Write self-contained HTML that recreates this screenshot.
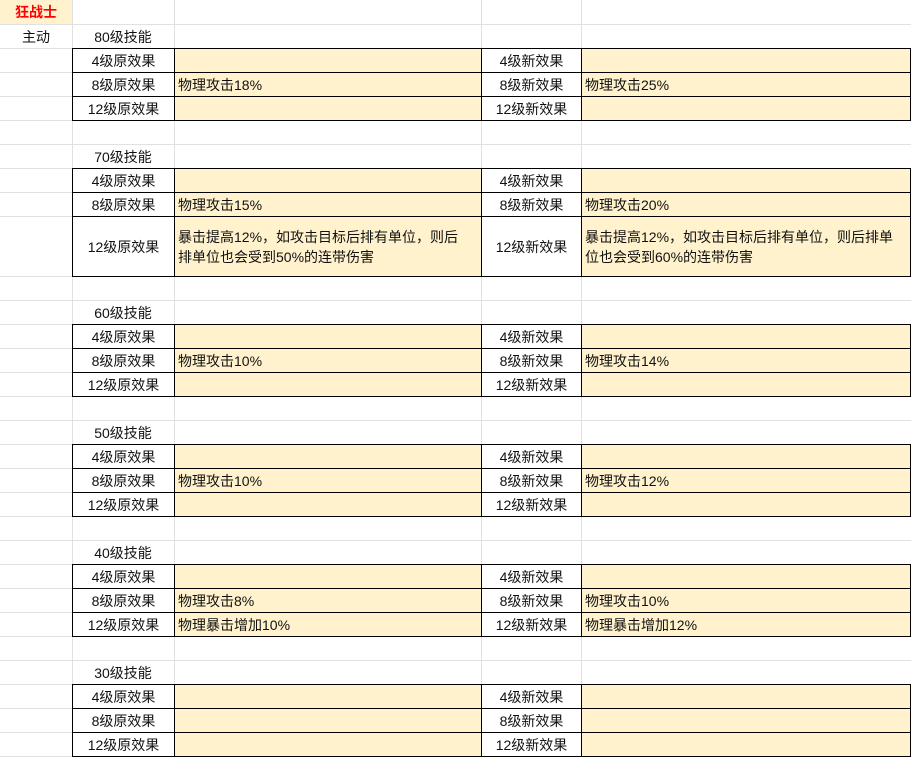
<!DOCTYPE html>
<html><head><meta charset="utf-8"><style>
body{margin:0;width:911px;height:757px;overflow:hidden;background:#fff;position:relative;font-family:"Liberation Sans","Noto Sans CJK SC",sans-serif;font-size:14px;color:#111}
.h{position:absolute;left:0;width:911px;height:1px;background:#e1e1e1}
.v{position:absolute;top:0;height:757px;width:1px;background:#e1e1e1}
.lab{position:absolute;height:24px;line-height:25px;text-align:center}
table{position:absolute;left:72px;border-collapse:collapse;table-layout:fixed;width:838px}
td{border:1px solid #000;padding:1px 3px 0;line-height:20px;vertical-align:middle}
td.c{text-align:center;background:#fff}
td.y{background:#fff2cc}
tr{height:24px}
</style></head><body>
<div class="h" style="top:24px"></div><div class="h" style="top:48px"></div><div class="h" style="top:72px"></div><div class="h" style="top:96px"></div><div class="h" style="top:120px"></div><div class="h" style="top:144px"></div><div class="h" style="top:168px"></div><div class="h" style="top:192px"></div><div class="h" style="top:216px"></div><div class="h" style="top:276px"></div><div class="h" style="top:300px"></div><div class="h" style="top:324px"></div><div class="h" style="top:348px"></div><div class="h" style="top:372px"></div><div class="h" style="top:396px"></div><div class="h" style="top:420px"></div><div class="h" style="top:444px"></div><div class="h" style="top:468px"></div><div class="h" style="top:492px"></div><div class="h" style="top:516px"></div><div class="h" style="top:540px"></div><div class="h" style="top:564px"></div><div class="h" style="top:588px"></div><div class="h" style="top:612px"></div><div class="h" style="top:636px"></div><div class="h" style="top:660px"></div><div class="h" style="top:684px"></div><div class="h" style="top:708px"></div><div class="h" style="top:732px"></div><div class="h" style="top:756px"></div>
<div class="v" style="left:72px"></div><div class="v" style="left:174px"></div><div class="v" style="left:481px"></div><div class="v" style="left:581px"></div>
<div class="lab" style="left:0;top:0;width:72px;background:#fff2cc;color:#f00;font-weight:bold">狂战士</div>
<div class="lab" style="left:0;top:25px;width:72px">主动</div>
<div class="lab" style="left:72px;top:25px;width:102px">80级技能</div>
<div class="lab" style="left:72px;top:145px;width:102px">70级技能</div>
<div class="lab" style="left:72px;top:301px;width:102px">60级技能</div>
<div class="lab" style="left:72px;top:421px;width:102px">50级技能</div>
<div class="lab" style="left:72px;top:541px;width:102px">40级技能</div>
<div class="lab" style="left:72px;top:661px;width:102px">30级技能</div>
<table style="top:48px"><colgroup><col style="width:102px"><col style="width:307px"><col style="width:100px"><col style="width:329px"></colgroup>
<tr><td class="c">4级原效果</td><td class="y"></td><td class="c">4级新效果</td><td class="y"></td></tr>
<tr><td class="c">8级原效果</td><td class="y">物理攻击18%</td><td class="c">8级新效果</td><td class="y">物理攻击25%</td></tr>
<tr><td class="c">12级原效果</td><td class="y"></td><td class="c">12级新效果</td><td class="y"></td></tr></table>
<table style="top:168px"><colgroup><col style="width:102px"><col style="width:307px"><col style="width:100px"><col style="width:329px"></colgroup>
<tr><td class="c">4级原效果</td><td class="y"></td><td class="c">4级新效果</td><td class="y"></td></tr>
<tr><td class="c">8级原效果</td><td class="y">物理攻击15%</td><td class="c">8级新效果</td><td class="y">物理攻击20%</td></tr>
<tr style="height:60px"><td class="c">12级原效果</td><td class="y" style="padding-right:12px">暴击提高12%，如攻击目标后排有单位，则后排单位也会受到50%的连带伤害</td><td class="c">12级新效果</td><td class="y">暴击提高12%，如攻击目标后排有单位，则后排单位也会受到60%的连带伤害</td></tr></table>
<table style="top:324px"><colgroup><col style="width:102px"><col style="width:307px"><col style="width:100px"><col style="width:329px"></colgroup>
<tr><td class="c">4级原效果</td><td class="y"></td><td class="c">4级新效果</td><td class="y"></td></tr>
<tr><td class="c">8级原效果</td><td class="y">物理攻击10%</td><td class="c">8级新效果</td><td class="y">物理攻击14%</td></tr>
<tr><td class="c">12级原效果</td><td class="y"></td><td class="c">12级新效果</td><td class="y"></td></tr></table>
<table style="top:444px"><colgroup><col style="width:102px"><col style="width:307px"><col style="width:100px"><col style="width:329px"></colgroup>
<tr><td class="c">4级原效果</td><td class="y"></td><td class="c">4级新效果</td><td class="y"></td></tr>
<tr><td class="c">8级原效果</td><td class="y">物理攻击10%</td><td class="c">8级新效果</td><td class="y">物理攻击12%</td></tr>
<tr><td class="c">12级原效果</td><td class="y"></td><td class="c">12级新效果</td><td class="y"></td></tr></table>
<table style="top:564px"><colgroup><col style="width:102px"><col style="width:307px"><col style="width:100px"><col style="width:329px"></colgroup>
<tr><td class="c">4级原效果</td><td class="y"></td><td class="c">4级新效果</td><td class="y"></td></tr>
<tr><td class="c">8级原效果</td><td class="y">物理攻击8%</td><td class="c">8级新效果</td><td class="y">物理攻击10%</td></tr>
<tr><td class="c">12级原效果</td><td class="y">物理暴击增加10%</td><td class="c">12级新效果</td><td class="y">物理暴击增加12%</td></tr></table>
<table style="top:684px"><colgroup><col style="width:102px"><col style="width:307px"><col style="width:100px"><col style="width:329px"></colgroup>
<tr><td class="c">4级原效果</td><td class="y"></td><td class="c">4级新效果</td><td class="y"></td></tr>
<tr><td class="c">8级原效果</td><td class="y"></td><td class="c">8级新效果</td><td class="y"></td></tr>
<tr><td class="c">12级原效果</td><td class="y"></td><td class="c">12级新效果</td><td class="y"></td></tr></table>
</body></html>
